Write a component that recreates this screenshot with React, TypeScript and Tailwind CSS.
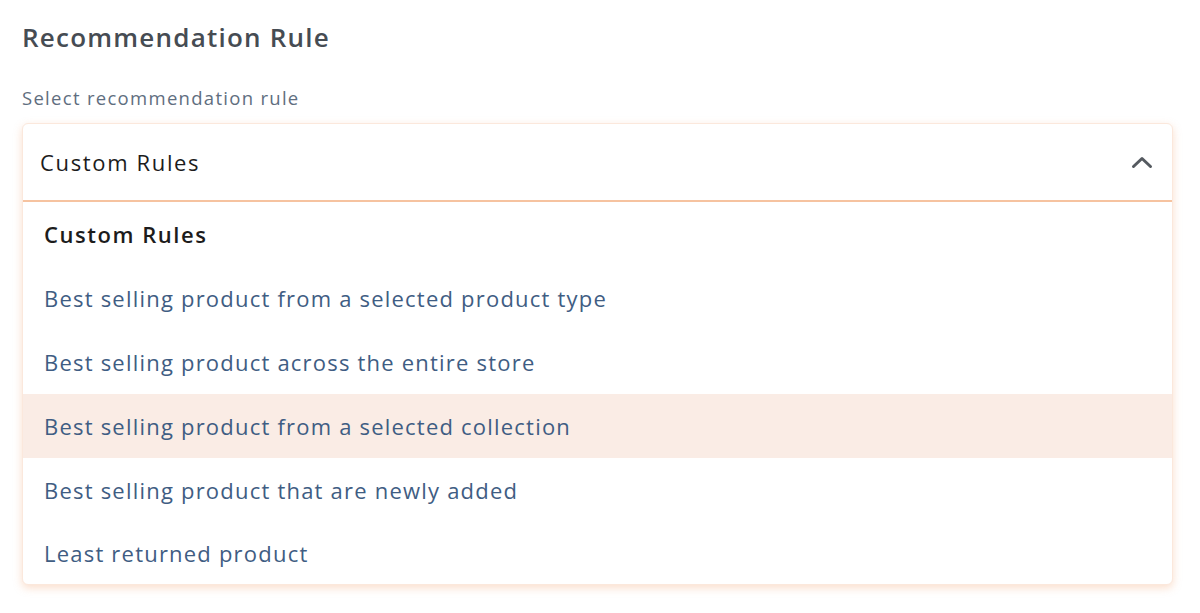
import { useState } from 'react';

const options = [
    'Best selling product from a selected product type',
    'Best selling product across the entire store',
    'Best selling product from a selected collection',
    'Best selling product that are newly added',
    'Least returned product',
];

export default function App() {
    const [hovered, setHovered] = useState(2);

    return (
        <div className="min-h-screen bg-white px-[22px] pt-[19px]" style={{ fontFamily: '"Open Sans", "Noto Sans", sans-serif' }}>
            <h1 className="text-[26px] font-semibold leading-[36px] tracking-[0.047em] text-[#464c53]">Recommendation Rule</h1>

            <label className="mt-[31px] block text-[18.5px] leading-[24px] tracking-[0.07em] text-[#5f6e80]">Select recommendation rule</label>

            {/* Select box, opened */}
            <div className="mt-[13px] w-[1151px] rounded-[6px] border border-[#fbe8dc] bg-white shadow-[0_3px_8px_rgba(240,160,110,0.35)]">
                <button className="flex h-[76px] w-full items-center justify-between pl-[17px] pr-[19px] text-left">
                    <span className="text-[22px] tracking-[0.075em] text-[#1c1c1c]">Custom Rules</span>
                    <svg width="22" height="14" viewBox="0 0 22 14" fill="none">
                        <path d="M2.5 11.5L11 3.5L19.5 11.5" stroke="#555a60" strokeWidth="3" strokeLinecap="round" strokeLinejoin="round" />
                    </svg>
                </button>
                <div className="h-[2px] bg-[#f6c3a0]" />

                <ul>
                    <li className="flex h-[64px] items-center px-[21px] text-[22px] font-semibold tracking-[0.07em] text-[#1c1c1c]">Custom Rules</li>
                    {options.map((opt, i) => (
                        <li
                            key={opt}
                            onMouseEnter={() => setHovered(i)}
                            className={`flex items-center px-[21px] text-[22px] tracking-[0.055em] text-[#3f5d83] ${i === hovered ? 'bg-[#faece5]' : ''} ${i === options.length - 1 ? 'h-[62px] rounded-b-[6px]' : 'h-[64px]'}`}
                        >
                            {opt}
                        </li>
                    ))}
                </ul>
            </div>
        </div>
    );
}
